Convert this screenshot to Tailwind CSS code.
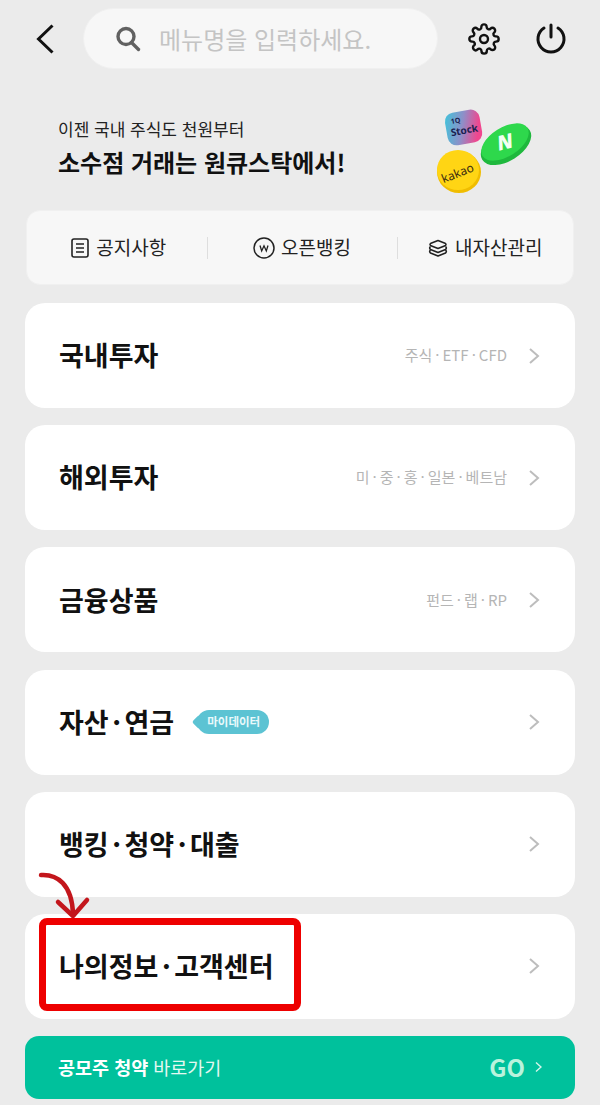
<!DOCTYPE html>
<html lang="ko">
<head>
<meta charset="utf-8">
<script src="https://cdn.jsdelivr.net/npm/@tailwindcss/browser@4"></script>
</head>
<body class="m-0">
<div class="relative w-[600px] h-[1105px] overflow-hidden bg-[#ebebeb] font-['Noto_Sans_CJK_KR','Noto_Sans',sans-serif] text-[#111] flex flex-col">
  <!-- header -->
  <div class="flex items-center h-[61px] mt-2 pl-[34px]">
    <svg class="w-6 h-9 shrink-0" viewBox="0 0 24 36" fill="none" stroke="#111" stroke-width="3"><path d="M18.500 4.500 L4.500 18 L18.500 31.500" /></svg>
    <div class="ml-[25px] w-[355px] h-[61px] rounded-full bg-[#f7f7f7] border border-[#f0f0f0] flex items-center pl-[30px]">
      <svg class="w-7 h-7 shrink-0" viewBox="0 0 28 28" fill="none" stroke="#616161" stroke-width="3.400"><circle cx="12" cy="11.500" r="8"/><path d="M17.500 17.500 L24.500 24.500" stroke-linecap="round"/></svg>
      <span class="ml-[17px] text-[24px] leading-none text-[#c4c4c4]">메뉴명을 입력하세요.</span>
    </div>
    <svg class="ml-[30px] w-8 h-8 shrink-0" viewBox="0 0 24 24" fill="none" stroke="#111" stroke-width="1.800" stroke-linejoin="round"><circle cx="12" cy="12" r="3"/><path d="M19.400 15a1.650 1.650 0 0 0 .33 1.820l.06.06a2 2 0 1 1-2.830 2.830l-.06-.06a1.650 1.650 0 0 0-2.800 1.170V21a2 2 0 1 1-4 0v-.09a1.650 1.650 0 0 0-2.880-1.120l-.06.06a2 2 0 1 1-2.830-2.830l.06-.06A1.650 1.650 0 0 0 3.090 14H3a2 2 0 1 1 0-4h.09a1.650 1.650 0 0 0 1.120-2.880l-.06-.06a2 2 0 1 1 2.830-2.830l.06.06A1.650 1.650 0 0 0 10 3.090V3a2 2 0 1 1 4 0v.09a1.650 1.650 0 0 0 2.880 1.120l.06-.06a2 2 0 1 1 2.830 2.830l-.06.06A1.650 1.650 0 0 0 20.910 10H21a2 2 0 1 1 0 4h-.09a1.650 1.650 0 0 0-1.510 1z"/></svg>
    <svg class="ml-[35px] w-8 h-9 shrink-0" viewBox="0 0 32 36" fill="none" stroke="#111" stroke-width="3" stroke-linecap="round"><path d="M16 4 V16"/><path d="M9 7 A13 13 0 1 0 23 7"/></svg>
  </div>
  <!-- banner -->
  <div class="h-[141px] relative pl-[58px] pt-[49px]">
    <p class="text-[17px] leading-[22px] text-[#222]">이젠 국내 주식도 천원부터</p>
    <p class="mt-[7px] text-[24px] leading-[30px] font-bold text-[#111]">소수점 거래는 원큐스탁에서!</p>
    <svg class="absolute left-[430px] top-[30px] w-[110px] h-[95px]" viewBox="0 0 110 95">
      <defs><linearGradient id="g" x1="0" y1="0" x2="1" y2="0.300"><stop offset="0" stop-color="#3cc6dc"/><stop offset="0.550" stop-color="#8e8fc8"/><stop offset="1" stop-color="#f0478f"/></linearGradient></defs>
      <rect x="16" y="12" width="35" height="33" rx="9" fill="url(#g)" transform="rotate(-10 33 28)"/>
      <text x="22" y="23" font-size="7" font-weight="700" fill="#1a2050" transform="rotate(-10 33 28)" font-family="Noto Sans">1Q</text>
      <text x="20" y="35" font-size="10" font-weight="700" fill="#1a2050" transform="rotate(-10 33 28)" font-family="Noto Sans">Stock</text>
      <ellipse cx="76" cy="46" rx="28" ry="16" fill="#1fb83d" transform="rotate(-32 76 46)"/>
      <ellipse cx="75" cy="43" rx="26.500" ry="14.500" fill="#2ed84c" transform="rotate(-32 75 43)"/>
      <text x="67" y="50" font-size="20" font-weight="900" font-style="italic" fill="#f2fff2" font-family="Noto Sans" transform="rotate(-14 75 43)">N</text>
      <ellipse cx="29" cy="73" rx="22" ry="21" fill="#f0bd00"/>
      <ellipse cx="28" cy="71" rx="21" ry="20" fill="#ffd514"/>
      <text x="10" y="78" font-size="12" fill="#3b2d10" transform="rotate(-22 28 72)" font-family="Noto Sans">kakao</text>
    </svg>
  </div>
  <!-- quick menu -->
  <div class="mx-[26px] h-[75px] rounded-[14px] bg-[#f7f7f7] border border-[#f0f0f0] flex items-center text-[19px] text-[#222]">
    <div class="flex-1 flex items-center justify-center gap-[7px] pl-[4px]">
      <svg class="w-[18px] h-[20px]" viewBox="0 0 18 20" fill="none" stroke="#222" stroke-width="1.600"><rect x="1" y="1" width="16" height="18" rx="2"/><path d="M5 6H13M5 10H13M5 14H13"/></svg>
      <span>공지사항</span>
    </div>
    <div class="w-px h-[22px] bg-[#dedede]"></div>
    <div class="w-[189px] flex items-center justify-center gap-[6px]">
      <svg class="w-[22px] h-[22px]" viewBox="0 0 22 22" fill="none" stroke="#222" stroke-width="1.500"><circle cx="11" cy="11" r="10"/><path d="M7 8.500L8.700 14L11 8.800L13.300 14L15 8.500" stroke-width="1.300"/></svg>
      <span>오픈뱅킹</span>
    </div>
    <div class="w-px h-[22px] bg-[#dedede]"></div>
    <div class="flex-1 flex items-center justify-center gap-[7px]">
      <svg class="w-[20px] h-[18px]" viewBox="0 0 20 18" fill="none" stroke="#222" stroke-width="1.600" stroke-linejoin="round"><path d="M10 1.500L17 4.200Q19 5.500 17 6.800L10 9.500L3 6.800Q1 5.500 3 4.200Z"/><path d="M2.500 7.500Q0.800 9.200 2.500 10.500L10 13.500L17.500 10.500Q19.200 9.200 17.500 7.500"/><path d="M2.500 11Q0.800 12.700 2.500 14L10 17L17.500 14Q19.200 12.700 17.500 11"/></svg>
      <span>내자산관리</span>
    </div>
  </div>
  <!-- rows -->
  <div class="mt-[18px] mx-[25px] flex flex-col gap-[17.2px]">
    <div class="h-[105px] rounded-[20px] bg-white flex items-center pl-[34px] pr-[35px]">
      <span class="text-[27px] font-bold">국내투자</span>
      <span class="ml-auto text-[15px] text-[#b5b5b5]">주식<span class="mx-[3px]">·</span>ETF<span class="mx-[3px]">·</span>CFD</span>
      <svg class="ml-[21px] w-[12px] h-[18px]" viewBox="0 0 12 18" fill="none" stroke="#bdbdbd" stroke-width="2"><path d="M2 2L10 9L2 16"/></svg>
    </div>
    <div class="h-[105px] rounded-[20px] bg-white flex items-center pl-[34px] pr-[35px]">
      <span class="text-[27px] font-bold">해외투자</span>
      <span class="ml-auto text-[15px] text-[#b5b5b5]">미<span class="mx-[3px]">·</span>중<span class="mx-[3px]">·</span>홍<span class="mx-[3px]">·</span>일본<span class="mx-[3px]">·</span>베트남</span>
      <svg class="ml-[21px] w-[12px] h-[18px]" viewBox="0 0 12 18" fill="none" stroke="#bdbdbd" stroke-width="2"><path d="M2 2L10 9L2 16"/></svg>
    </div>
    <div class="h-[105px] rounded-[20px] bg-white flex items-center pl-[34px] pr-[35px]">
      <span class="text-[27px] font-bold">금융상품</span>
      <span class="ml-auto text-[15px] text-[#b5b5b5]">펀드<span class="mx-[3px]">·</span>랩<span class="mx-[3px]">·</span>RP</span>
      <svg class="ml-[21px] w-[12px] h-[18px]" viewBox="0 0 12 18" fill="none" stroke="#bdbdbd" stroke-width="2"><path d="M2 2L10 9L2 16"/></svg>
    </div>
    <div class="h-[105px] rounded-[20px] bg-white flex items-center pl-[34px] pr-[35px]">
      <span class="text-[27px] font-bold">자산<span class="mx-[3.500px]">·</span>연금</span>
      <span class="relative ml-[23px] h-[24px] w-[72px] rounded-full bg-[#5cc3d3] text-[#eaf9fb] text-[11.500px] font-bold flex items-center justify-center pl-[1px]">마이데이터<span class="absolute left-[-3px] top-[7px] w-[10px] h-[10px] rotate-45 rounded-[2px] bg-[#5cc3d3]"></span></span>
      <svg class="ml-auto w-[12px] h-[18px]" viewBox="0 0 12 18" fill="none" stroke="#bdbdbd" stroke-width="2"><path d="M2 2L10 9L2 16"/></svg>
    </div>
    <div class="h-[105px] rounded-[20px] bg-white flex items-center pl-[34px] pr-[35px]">
      <span class="text-[27px] font-bold">뱅킹<span class="mx-[3.500px]">·</span>청약<span class="mx-[3.500px]">·</span>대출</span>
      <svg class="ml-auto w-[12px] h-[18px]" viewBox="0 0 12 18" fill="none" stroke="#bdbdbd" stroke-width="2"><path d="M2 2L10 9L2 16"/></svg>
    </div>
    <div class="h-[105px] rounded-[20px] bg-white flex items-center pl-[34px] pr-[35px]">
      <span class="text-[27px] font-bold">나의정보<span class="mx-[3.500px]">·</span>고객센터</span>
      <svg class="ml-auto w-[12px] h-[18px]" viewBox="0 0 12 18" fill="none" stroke="#bdbdbd" stroke-width="2"><path d="M2 2L10 9L2 16"/></svg>
    </div>
  </div>
  <!-- green banner -->
  <div class="mt-[17px] mx-[25px] h-[63px] rounded-[14px] bg-[#00c19c] flex items-center pl-[33px] pr-[33px] text-[18.500px] text-white">
    <span class="font-bold">공모주 청약</span>
    <span class="ml-[5px] text-[#e3f8f1]">바로가기</span>
    <span class="ml-auto text-[24px] font-bold text-[#b9f3dd]">GO</span>
    <svg class="ml-[10px] w-[7px] h-[12px]" viewBox="0 0 7 12" fill="none" stroke="#d5f5ea" stroke-width="1.400"><path d="M1 1.500L6 6L1 10.500"/></svg>
  </div>
  <!-- annotation -->
  <div class="absolute left-[39px] top-[918px] w-[262px] h-[93px] border-[7px] border-[#ee0000] rounded-[8px]"></div>
  <svg class="absolute left-[35px] top-[868px] w-[56px] h-[52px]" viewBox="0 0 56 52" fill="none" stroke="#c3161c" stroke-width="4.500" stroke-linecap="round" stroke-linejoin="round"><path d="M6 7C22 6 37 16 38 46"/><path d="M23 34L38 48L52 32"/></svg>
</div>
</body>
</html>
